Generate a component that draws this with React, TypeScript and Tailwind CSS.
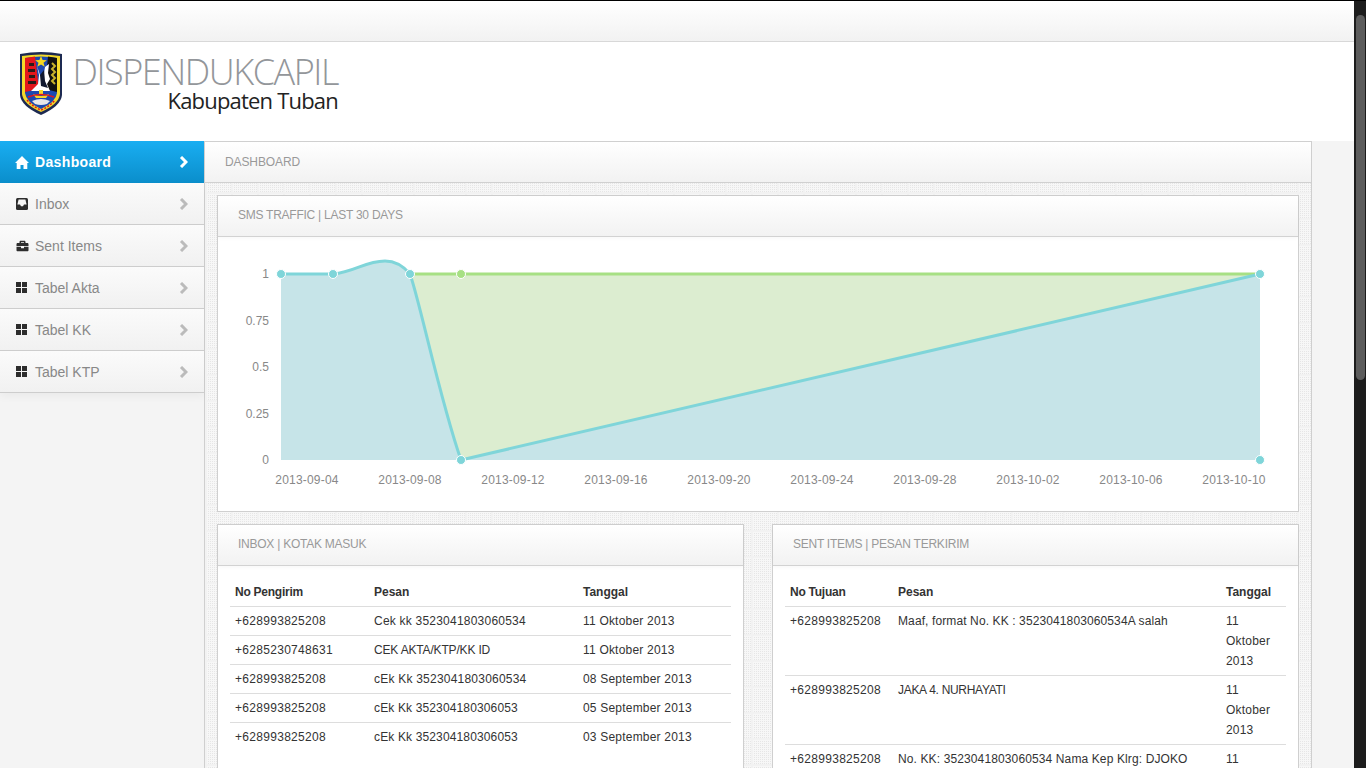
import { FaBriefcase } from "react-icons/fa";

const grid = () => (
  <svg width="11" height="11" viewBox="0 0 11 11" className="mr-2 shrink-0" fill="#2d2d2d">
    <rect width="5" height="5" />
    <rect x="6" width="5" height="5" />
    <rect y="6" width="5" height="5" />
    <rect x="6" y="6" width="5" height="5" />
  </svg>
);

const inboxIcon = () => (
  <svg width="12" height="12" viewBox="0 0 12 12" className="mr-[7px] shrink-0">
    <rect width="12" height="12" rx="1.5" fill="#2d2d2d" />
    <path d="M2.6 1.5 H9.4 L10.6 6.5 H8 L7 8.2 H5 L4 6.5 H1.4 Z" fill="#f6f6f6" />
  </svg>
);

const sentIcon = () => <FaBriefcase className="w-[13px] h-3 mr-[6px] text-[#2d2d2d] shrink-0" />;

const menu = [
  { label: "Inbox", icon: inboxIcon },
  { label: "Sent Items", icon: sentIcon },
  { label: "Tabel Akta", icon: grid },
  { label: "Tabel KK", icon: grid },
  { label: "Tabel KTP", icon: grid },
];

// 4th value is letter spacing for the message, the capture's hinted Arial runs wider on digits
const inbox = [
  ["+628993825208", "Cek kk 3523041803060534", "11 Oktober 2013", "tracking-[0.22px]"],
  ["+6285230748631", "CEK AKTA/KTP/KK ID", "11 Oktober 2013", "tracking-[-0.17px]"],
  ["+628993825208", "cEk Kk 3523041803060534", "08 September 2013", "tracking-[0.22px]"],
  ["+628993825208", "cEk Kk 352304180306053", "05 September 2013", "tracking-[0.14px]"],
  ["+628993825208", "cEk Kk 352304180306053", "03 September 2013", "tracking-[0.14px]"],
];

const sent = [
  ["+628993825208", "Maaf, format No. KK : 3523041803060534A salah", "11 Oktober 2013", "tracking-[0.11px]"],
  ["+628993825208", "JAKA 4. NURHAYATI", "11 Oktober 2013", "tracking-[-0.3px]"],
  ["+628993825208", "No. KK: 3523041803060534 Nama Kep Klrg: DJOKO", "11 Oktober 2013", "tracking-[0.12px]"],
];

const xLabels = [
  "2013-09-04", "2013-09-08", "2013-09-12", "2013-09-16", "2013-09-20",
  "2013-09-24", "2013-09-28", "2013-10-02", "2013-10-06", "2013-10-10",
];
const yLabels = [
  ["1", 37], ["0.75", 83.5], ["0.5", 130], ["0.25", 176.5], ["0", 223],
] as const;

function Chevron({ color }: { color: string }) {
  return (
    <svg width="9" height="12" viewBox="0 0 9 12" className="shrink-0">
      <polyline points="2,1 7,6 2,11" fill="none" stroke={color} strokeWidth="3" />
    </svg>
  );
}

function Logo() {
  return (
    <svg width="44" height="65" viewBox="0 0 44 65" className="shrink-0">
      <path d="M1 3 Q22 -1 43 3 L43 44 Q42 55 22 64 Q2 55 1 44 Z" fill="#1d2a52" />
      <path d="M3 5 Q22 2 41 5 L41 43 Q40 53 22 61 Q4 53 3 43 Z" fill="#f4d92a" />
      <path d="M6 7 Q22 4 38 7 L38 42 Q37 51 22 58 Q7 51 6 42 Z" fill="#1d49b0" />
      <path d="M6 7 L16 5.5 L20 38 L6 41 Z" fill="#e3161c" />
      <path d="M29 5.5 L38 7 L38 41 L26 38 Z" fill="#111" />
      <path d="M10 12 h5 v3 h-5 Z M9 18 h7 v3 h-7 Z M10 24 h6 v3 h-6 Z M9 30 h8 v3 h-8 Z" fill="#2a1a1a" />
      <path d="M33 12 l3 3 -3 3 3 3 -3 3 3 3 -3 3 3 3" stroke="#c9b32b" strokeWidth="2" fill="none" />
      <path d="M22 5 l1.6 4 4.2 .2 -3.3 2.6 1.2 4 -3.7 -2.3 -3.7 2.3 1.2 -4 -3.3 -2.6 4.2 -.2 Z" fill="#f6d820" />
      <path d="M18 15 L20 24 L19 33 L12 40 L31 40 L28 33 L31 28 L29 22 L30 13 L26 16 L24 28 L21 24 Z" fill="#fff" />
      <path d="M21 24 L25 19 L26 30 L29 37 L22 35 Z" fill="#10182f" />
      <path d="M14 43 Q22 47 30 43 L27 47 L17 47 Z M20 39 h4 v4 h-4 Z" fill="#f4d92a" />
      <path d="M9 46 Q22 41 35 46" stroke="#e3161c" strokeWidth="1.5" fill="none" />
      <path d="M13 50 Q22 46 31 50 L28 53 Q22 55 16 53 Z" fill="#e8e8e8" />
      <path d="M8 49 Q14 56 22 59 Q30 56 36 49" stroke="#e3161c" strokeWidth="1.5" strokeDasharray="2 1.5" fill="none" />
    </svg>
  );
}

function Chart() {
  const blueLine =
    "M63 37 L115 37 C137 35 147 24 167 24 C180 24 187 31 192 37 C202 65 222 163 243 223 L1042 37";
  return (
    <svg width="1080" height="274" className="block">
      <path d="M192 37 L1042 37 L243 223 C222 163 202 65 192 37 Z" fill="#dcedd0" />
      <path d={`${blueLine} L1042 223 L63 223 Z`} fill="#c6e4e8" />
      <path d="M192 37 L1042 37" stroke="#a7e084" strokeWidth="3" fill="none" />
      <path d={blueLine} stroke="#7fd5d9" strokeWidth="3" fill="none" />
      <circle cx="243" cy="37" r="4.5" fill="#a7e084" stroke="#fff" />
      {[[63, 37], [115, 37], [192, 37], [243, 223], [1042, 37], [1042, 223]].map(([x, y]) => (
        <circle key={`${x}-${y}`} cx={x} cy={y} r="4.5" fill="#7fd5d9" stroke="#fff" />
      ))}
      {yLabels.map(([t, y]) => (
        <text key={t} x="51" y={y + 4} textAnchor="end" fontSize="12" fill="#888">
          {t}
        </text>
      ))}
      {xLabels.map((t, i) => (
        <text key={t} x={89 + i * 103} y="247" textAnchor="middle" fontSize="12" fill="#888" className="tracking-[0.2px]">
          {t}
        </text>
      ))}
    </svg>
  );
}

function PanelHead({ title }: { title: string }) {
  return (
    <div className="h-[41px] shrink-0 flex items-center pl-5 border-b border-[#d2d2d2] bg-gradient-to-b from-white to-[#f2f2f2] text-xs tracking-[-0.25px] text-[#999] pb-[2px] shadow-[0_1px_4px_rgba(0,0,0,0.04)]">
      {title}
    </div>
  );
}

function MsgTable({ head, rows, widths }: { head: string[]; rows: string[][]; widths: string[] }) {
  return (
    <table className="w-full table-fixed border-collapse text-xs text-[#333] leading-5">
      <colgroup>
        {widths.map((w, i) => (
          <col key={i} className={w} />
        ))}
      </colgroup>
      <thead>
        <tr>
          {head.map((h, i) => (
            <th key={h} className={`text-left font-bold px-[5px] py-1 align-bottom ${i === 0 ? "tracking-[-0.25px]" : ""}`}>
              {h}
            </th>
          ))}
        </tr>
      </thead>
      <tbody>
        {rows.map(([from, msg, date, spacing], i) => (
          <tr key={i} className="border-t border-[#ddd]">
            <td className="px-[5px] py-1 align-top tracking-[0.3px]">{from}</td>
            <td className={`px-[5px] py-1 align-top ${spacing}`}>{msg}</td>
            <td className="px-[5px] py-1 align-top tracking-[0.2px]">{date}</td>
          </tr>
        ))}
      </tbody>
    </table>
  );
}

export default function App() {
  return (
    <div className="h-screen flex overflow-hidden border-t border-black bg-white font-['Liberation_Sans',Arial,sans-serif]">
      <div className="flex-1 min-w-0 flex flex-col">
        <div className="h-[41px] shrink-0 border-b border-[#d8d8d8] bg-gradient-to-b from-white to-[#f2f2f2]" />
        <header className="h-[99px] shrink-0 flex items-start pl-[19px] pt-[9px] bg-white">
          <Logo />
          <div className="ml-[11px] mt-[2px] w-[264px] flex flex-col items-end">
            <span className="font-['Open_Sans',sans-serif] font-light text-[36px] leading-[38px] tracking-[-1.45px] text-[#93969a]">
              DISPENDUKCAPIL
            </span>
            <span className="font-['Open_Sans',sans-serif] text-[22px] leading-[18px] tracking-[-0.8px] text-[#222]">
              Kabupaten Tuban
            </span>
          </div>
        </header>

        <div className="flex-1 min-h-0 flex bg-[#f4f4f4]">
          <aside className="w-[205px] shrink-0 border-r border-[#cfcfcf]">
            <div className="h-[42px] flex items-center pl-[15px] pr-[16px] bg-gradient-to-b from-[#19aef2] to-[#0a8ecb] text-white text-sm font-bold tracking-[0.35px]">
              <svg width="14" height="13" viewBox="0 0 14 13" className="mr-[6px] shrink-0" fill="#fff">
                <path d="M7 0 L14 7 H12.3 V13 H8.5 V9 H5.5 V13 H1.7 V7 H0 Z" />
              </svg>
              <span className="flex-1">Dashboard</span>
              <Chevron color="#fff" />
            </div>
            <div className="shadow-[0_4px_8px_rgba(0,0,0,0.04)]">
              {menu.map(({ label, icon: Icon }) => (
                <div
                  key={label}
                  className="h-[42px] flex items-center pl-4 pr-[16px] border-b border-[#cdcdcd] bg-gradient-to-b from-[#fbfbfb] to-[#f1f1f1] text-sm text-[#888]"
                >
                  <Icon />
                  <span className="flex-1">{label}</span>
                  <Chevron color="#bbb" />
                </div>
              ))}
            </div>
          </aside>

          <main className="w-[1107px] shrink-0 flex flex-col border-r border-[#cfcfcf] bg-[#f7f7f7] bg-[linear-gradient(to_right,#f2f2f2_2px,transparent_2px),linear-gradient(to_bottom,#f2f2f2_2px,transparent_2px),conic-gradient(#e6e6e6_25%,transparent_0)] bg-size-[26px_26px,26px_26px,2px_2px] bg-position-[0_0,0_-1px,0_0]">
            <div className="h-[42px] shrink-0 flex items-center pl-5 border-y border-[#d0d0d0] bg-gradient-to-b from-white to-[#f2f2f2] text-xs tracking-[-0.1px] text-[#999]">
              DASHBOARD
            </div>
            <div className="flex-1 min-h-0 flex flex-col gap-3 px-3 pt-3">
              <section className="shrink-0 h-[317px] flex flex-col bg-white border border-[#cfcfcf]">
                <PanelHead title="SMS TRAFFIC | LAST 30 DAYS" />
                <Chart />
              </section>
              <div className="flex-1 grid grid-cols-2 gap-7">
                <section className="bg-white border border-[#cfcfcf]">
                  <PanelHead title="INBOX | KOTAK MASUK" />
                  <div className="px-3 pt-3">
                    <MsgTable
                      head={["No Pengirim", "Pesan", "Tanggal"]}
                      rows={inbox}
                      widths={["w-[139px]", "w-[209px]", "w-[153px]"]}
                    />
                  </div>
                </section>
                <section className="bg-white border border-[#cfcfcf]">
                  <PanelHead title="SENT ITEMS | PESAN TERKIRIM" />
                  <div className="px-3 pt-3">
                    <MsgTable
                      head={["No Tujuan", "Pesan", "Tanggal"]}
                      rows={sent}
                      widths={["w-[108px]", "w-[328px]", "w-[65px]"]}
                    />
                  </div>
                </section>
              </div>
            </div>
          </main>
          <div className="flex-1" />
        </div>
      </div>

      <div className="w-3 shrink-0 bg-[#1c1c1c] pt-[14px] pl-[2px]">
        <div className="w-[9px] h-[365px] rounded-full bg-[#5c5c5c]" />
      </div>
    </div>
  );
}
